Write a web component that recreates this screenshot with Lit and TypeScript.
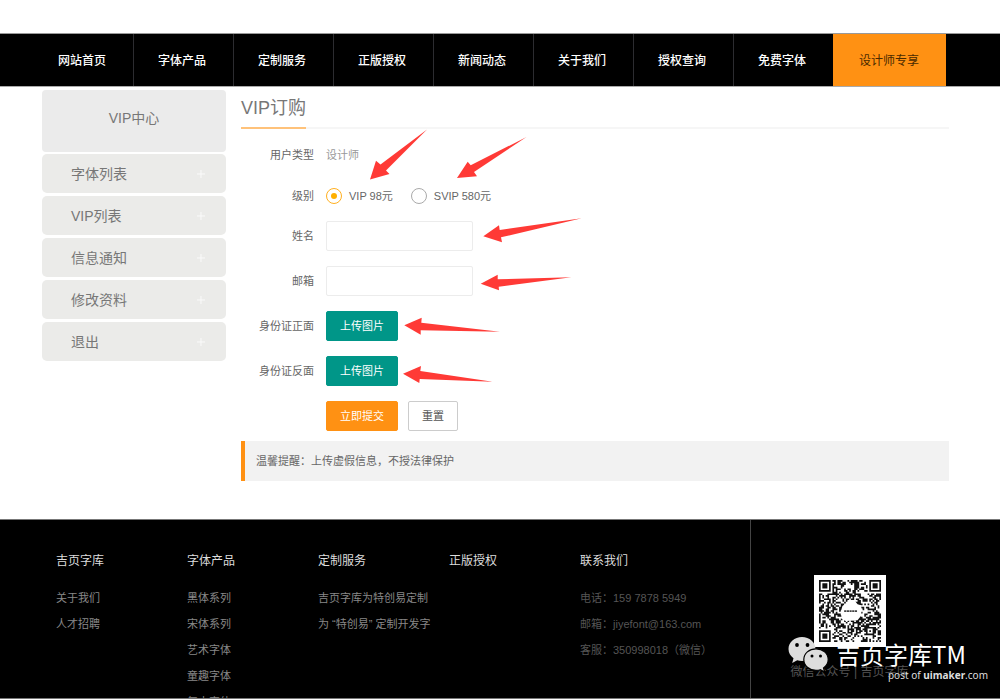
import { LitElement, html, svg, css } from "lit";
import { customElement, state } from "lit/decorators.js";
import { classMap } from "lit/directives/class-map.js";

const NAV = ["网站首页", "字体产品", "定制服务", "正版授权", "新闻动态", "关于我们", "授权查询", "免费字体"];
const MENU = ["字体列表", "VIP列表", "信息通知", "修改资料", "退出"];
const LINKS = [
  { title: "吉页字库", items: ["关于我们", "人才招聘"] },
  { title: "字体产品", items: ["黑体系列", "宋体系列", "艺术字体", "童趣字体", "复古字体"] },
  { title: "定制服务", items: ["吉页字库为特创易定制", "为 “特创易” 定制开发字"] },
  { title: "正版授权", items: [] as string[] },
];
const CONTACT = ["电话：159 7878 5949", "邮箱：jiyefont@163.com", "客服：350998018（微信）"];

const ARROWS = [
  "370,179.5 376,160.7 380.5,164.5 427,129.5 386,170.5 389.5,174",
  "457,178 467.7,161.7 470.7,165.3 526.5,137 474,172 477,176.3",
  "483.3,236.3 499,225.3 499.7,230 581.7,218.3 501,237.3 502,242.3",
  "480.7,283.7 497.7,274.7 497.7,279.3 571.3,277.3 498.7,286.7 499,290.3",
  "404.3,325.3 421.7,317.7 421.3,322.7 500,331.7 420.7,330.3 420.7,334.7",
  "403,373.7 421,366 420.3,371 492.7,381.7 419.7,379 419.3,383",
];

const QR_SIZE = 37;

/* Builds the module path of the code: data modules, three finders, one alignment mark. */
function qrPath(): string {
  let seed = 20177;
  const rand = () => {
    seed = (seed * 1103515245 + 12345) % 2147483648;
    return seed / 2147483648;
  };
  const ring = (x: number, y: number, cx: number, cy: number) =>
    Math.max(Math.abs(x - cx), Math.abs(y - cy));
  let d = "";
  for (let y = 0; y < QR_SIZE; y++) {
    for (let x = 0; x < QR_SIZE; x++) {
      let on = rand() < 0.52;
      for (const [cx, cy] of [[3, 3], [33, 3], [3, 33]]) {
        const r = ring(x, y, cx, cy);
        if (r <= 4) on = r === 3 || r <= 1;
      }
      const a = ring(x, y, 30, 30);
      if (a <= 2) on = a !== 1;
      if (on) d += `M${x} ${y}h1v1h-1z`;
    }
  }
  return d;
}

@customElement("qr-code")
export class QrCode extends LitElement {
  static styles = css`
    :host { display: block; background: #fff; padding: 5px; }
    .code { display: block; width: 62px; height: 62px; }
  `;
  render() {
    return html`<svg class="code" viewBox="0 0 37 37" role="img" aria-label="二维码">
      <path d=${qrPath()} fill="#111"></path>
      <path d="M14 15.500l2-1.500 1.500-1.500h4l1.500 2 2 .5 .5 2.500-.5 4-2 2.500-7 .5-2.500-1.500-.5-4z" fill="#fff"></path>
      <path d="M15 18.600h8" stroke="#444" stroke-width="1.100" stroke-dasharray="1.300 .3"></path>
    </svg>`;
  }
}

@customElement("app-root")
export class AppRoot extends LitElement {
  @state() private level = "vip";

  static styles = css`
    :host {
      display: flex;
      flex-direction: column;
      position: relative;
      height: 100vh;
      overflow: hidden;
      background: #fff;
      color: #666;
      font: 11px/20px "Liberation Sans", "Noto Sans CJK SC", sans-serif;
    }
    * { box-sizing: border-box; }
    a { color: inherit; text-decoration: none; }
    ul { list-style: none; margin: 0; padding: 0; }

    .nav {
      display: flex;
      flex: none;
      margin-top: 33px;
      padding-left: 33px;
      background: #000;
      border-top: 1px solid #999;
      border-bottom: 1px solid #aaa;
      font-size: 12px;
    }
    .nav-link {
      width: 100px;
      height: 52px;
      padding-right: 3px;
      border-left: 1px solid #2c2c30;
      line-height: 54px;
      color: #fff;
      font-weight: 500;
      text-align: center;
      white-space: nowrap;
    }
    .nav-link.first { border-left-color: transparent; }
    .nav-link.active {
      width: auto;
      border: 0;
      padding: 0 27px 0 26px;
      background: #ff9113;
      color: #4a2a00;
      font-weight: 400;
    }

    .body {
      display: flex;
      flex: none;
      gap: 15px;
      padding: 3px 51px 38px 42px;
    }
    .side { flex: none; width: 184px; font-size: 14px; color: #777; }
    .side-title {
      margin: 0 0 2px;
      height: 62px;
      line-height: 56px;
      border-radius: 4px;
      background: #ebebeb;
      font-size: 14px;
      font-weight: 400;
      text-align: center;
    }
    .side-list { display: grid; gap: 3px; }
    .side-link {
      display: flex;
      align-items: center;
      justify-content: space-between;
      height: 39px;
      padding: 0 21px 0 29px;
      border-radius: 5px;
      background: #ebebe9;
    }
    .plus { width: 8px; height: 8px; }

    .main { flex: 1; min-width: 0; }
    .title-bar { border-bottom: 2px solid #f6f6f6; display: flex; height: 39px; }
    .title {
      margin: 0 0 -2px;
      border-bottom: 2px solid #ffc27a;
      color: #777;
      font-size: 18px;
      font-weight: 400;
      line-height: 36px;
    }

    .form { display: grid; gap: 15px; padding: 16px 0 10px; }
    .row { display: grid; grid-template-columns: 73px 1fr; gap: 12px; align-items: center; }
    .row.info { margin-bottom: 6px; }
    .label { text-align: right; white-space: nowrap; }
    .value { color: #999; }
    .options { display: flex; gap: 18px; }
    .option { display: flex; align-items: center; gap: 7px; }
    .radio {
      appearance: none;
      display: grid;
      place-items: center;
      width: 16px;
      height: 16px;
      margin: 0;
      border: 1px solid #aaa;
      border-radius: 50%;
    }
    .radio:checked { border-color: #ffb020; }
    .radio:checked::before {
      content: "";
      width: 6px;
      height: 6px;
      border-radius: 50%;
      background: #ffb000;
    }
    .text {
      width: 147px;
      height: 30px;
      padding: 0 8px;
      border: 1px solid #ececec;
      border-radius: 2px;
      font: inherit;
      color: #666;
      outline: none;
    }
    .actions { display: flex; gap: 10px; }
    .btn {
      height: 30px;
      padding: 0 13px;
      border: 1px solid #009688;
      border-radius: 2px;
      background: #009688;
      color: #fff;
      font: inherit;
      white-space: nowrap;
    }
    .btn.submit { border-color: #ff9113; background: #ff9113; }
    .btn.reset { border-color: #ccc; background: #fff; color: #555; }
    .tip {
      margin: 0;
      padding: 10px 11px;
      border-left: 4px solid #ff9113;
      background: #f2f2f2;
    }

    .footer {
      display: flex;
      flex: 1;
      min-height: 0;
      margin-bottom: 1px;
      overflow: hidden;
      border-top: 1px solid #777;
      border-bottom: 1px solid #777;
      background: #000;
      color: #888;
    }
    .columns {
      flex: 1;
      min-width: 0;
      display: grid;
      grid-template-columns: repeat(5, 131px);
      padding: 31px 0 0 56px;
      line-height: 26px;
      white-space: nowrap;
    }
    .col-title {
      margin: 0 0 14px;
      color: #ddd;
      font-size: 12px;
      font-weight: 400;
      line-height: 20px;
    }
    .contact { color: #555; }
    .follow {
      flex: none;
      width: 25%;
      position: relative;
      display: flex;
      flex-direction: column;
      align-items: center;
      gap: 15px;
      padding: 55px 52px 0 0;
      border-left: 1px solid #444;
    }
    .caption { margin: 0; color: #555; font-size: 12px; white-space: nowrap; }
    .brand {
      position: absolute;
      right: 34px;
      bottom: 26px;
      display: flex;
      align-items: center;
      gap: 7px;
      color: #fff;
      font: 24px/36px "Noto Sans CJK SC", sans-serif;
      white-space: nowrap;
    }
    .wechat { width: 42px; height: 36px; }
    .credit {
      position: absolute;
      right: 12px;
      bottom: 13px;
      color: #ddd;
      font-family: "Noto Sans", sans-serif;
      font-size: 10px;
      white-space: nowrap;
    }
    .arrows {
      position: absolute;
      left: 0;
      top: 0;
      width: 1000px;
      height: 700px;
      pointer-events: none;
    }
  `;

  private pick(e: Event) {
    this.level = (e.target as HTMLInputElement).value;
  }

  private option(value: string, text: string) {
    return html`<label class="option">
      <input class="radio" type="radio" name="level" value=${value}
        .checked=${this.level === value} @change=${this.pick} />${text}
    </label>`;
  }

  render() {
    return html`
      <nav class="nav">
        ${NAV.map((t, i) => html`<a href="#" class=${classMap({ "nav-link": true, first: i === 0 })}>${t}</a>`)}
        <a href="#" class="nav-link active">设计师专享</a>
      </nav>

      <div class="body">
        <aside class="side">
          <h2 class="side-title">VIP中心</h2>
          <ul class="side-list">
            ${MENU.map((t) => html`<li><a class="side-link" href="#">${t}
              <svg class="plus" viewBox="0 0 8 8" aria-hidden="true"><path d="M4 0v8M0 4h8" stroke="#fafafa"></path></svg>
            </a></li>`)}
          </ul>
        </aside>

        <main class="main">
          <div class="title-bar"><h1 class="title">VIP订购</h1></div>
          <form class="form" @submit=${(e: Event) => e.preventDefault()}>
            <div class="row info"><span class="label">用户类型</span><span class="value">设计师</span></div>
            <div class="row" role="radiogroup" aria-labelledby="level-label">
              <span class="label" id="level-label">级别</span>
              <div class="options">${this.option("vip", "VIP 98元")}${this.option("svip", "SVIP 580元")}</div>
            </div>
            <div class="row"><label class="label" for="name">姓名</label><input class="text" id="name" type="text" /></div>
            <div class="row"><label class="label" for="email">邮箱</label><input class="text" id="email" type="email" /></div>
            <div class="row">
              <label class="label" for="front">身份证正面</label>
              <div class="actions"><button class="btn" id="front" type="button">上传图片</button></div>
            </div>
            <div class="row">
              <label class="label" for="back">身份证反面</label>
              <div class="actions"><button class="btn" id="back" type="button">上传图片</button></div>
            </div>
            <div class="row">
              <span></span>
              <div class="actions">
                <button class="btn submit" type="submit">立即提交</button>
                <button class="btn reset" type="reset">重置</button>
              </div>
            </div>
          </form>
          <p class="tip">温馨提醒：上传虚假信息，不授法律保护</p>
        </main>
      </div>

      <footer class="footer">
        <div class="columns">
          ${LINKS.map((c) => html`<section>
            <h3 class="col-title">${c.title}</h3>
            <ul>${c.items.map((t) => html`<li><a href="#">${t}</a></li>`)}</ul>
          </section>`)}
          <section>
            <h3 class="col-title">联系我们</h3>
            <ul class="contact">${CONTACT.map((t) => html`<li>${t}</li>`)}</ul>
          </section>
        </div>
        <div class="follow">
          <qr-code></qr-code>
          <p class="caption">微信公众号 | 吉页字库</p>
          <div class="brand">
            <svg class="wechat" viewBox="0 0 42 36" aria-hidden="true">
              <path d="M15 1C7.500 1 1.500 6.200 1.500 13c0 3.800 1.900 7 5 9.200L5.200 27l5-2.800c1.500.5 3.100.8 4.800.8 7.500 0 13.500-5.200 13.500-12S22.500 1 15 1z" fill="#ddd"></path>
              <path d="M29 12.800c-6.800 0-12.200 4.700-12.200 10.800S22.200 34.400 29 34.400c1.500 0 3-.2 4.300-.7l4.400 2.300-1.200-4c2.900-2 4.700-5 4.700-8.400 0-6.100-5.400-10.800-12.200-10.800z" fill="#ddd" stroke="#000" stroke-width="1.200"></path>
              <g fill="#000"><circle cx="10" cy="9" r="1.900"></circle><circle cx="20.500" cy="9" r="1.900"></circle>
              <circle cx="25" cy="20" r="1.500"></circle><circle cx="33.500" cy="20" r="1.500"></circle></g>
            </svg>
            <span>吉页字库TM</span>
          </div>
          <span class="credit">post of <b>uimaker</b>.com</span>
        </div>
      </footer>

      <svg class="arrows" viewBox="0 0 1000 700" aria-hidden="true">
        ${ARROWS.map((p) => svg`<polygon points=${p} fill="#ff3a36"></polygon>`)}
      </svg>
    `;
  }
}
